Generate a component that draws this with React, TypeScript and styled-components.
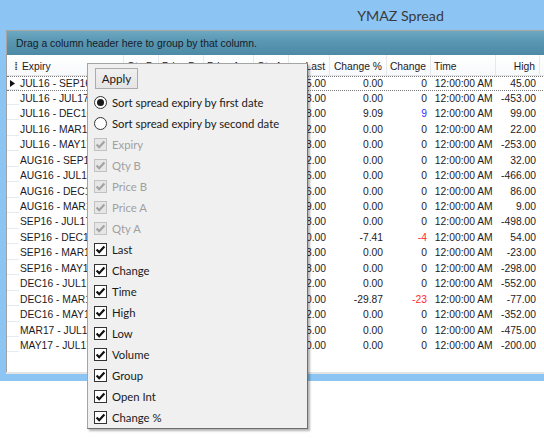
import React from "react";
import styled, { createGlobalStyle } from "styled-components";

const GlobalStyle = createGlobalStyle`
  html, body { margin: 0; padding: 0; background: #ffffff; overflow: hidden; }
  * { box-sizing: border-box; }
`;

const Page = styled.div`
  position: relative;
  width: 544px;
  height: 439px;
  overflow: hidden;
  background: #ffffff;
`;

const Window = styled.div`
  width: 801px;
  height: 381px;
  background: #8cc5f4;
  display: flex;
  flex-direction: column;
`;

const TitleBar = styled.div`
  height: 30px;
  display: flex;
  align-items: center;
  justify-content: center;
  font-family: Lato, "Liberation Sans", sans-serif;
  font-size: 14.2px;
  color: #3a3a3a;
  padding-top: 1px;
`;

const Body = styled.div`
  flex: 1;
  display: flex;
  flex-direction: column;
  padding: 0 0 7px 6px;
`;

const GroupPanel = styled.div`
  height: 25px;
  border-top: 1px solid #a8a69e;
  border-left: 1px solid #a8a69e;
  background: linear-gradient(#6ea8c2 0%, #5896b1 45%, #4c8aa5 100%);
  display: flex;
  align-items: center;
  padding-left: 9px;
  font-family: "Liberation Sans", Arial, sans-serif;
  font-size: 10.4px;
  color: #16202a;
`;

const Grid = styled.div`
  flex: 1;
  background: #ffffff;
  border-left: 1px solid #a0a0a0;
  display: flex;
  flex-direction: column;
  font-family: "Liberation Sans", Arial, sans-serif;
  font-size: 10.3px;
  color: #1e1a24;
`;

const BottomStrip = styled.div`
  height: 2px;
  background: #e4e4e4;
`;

const cols = "12px 105px 35px 45px 50px 35px 41px 57px 44px 65px 44px 44px 1fr";

const HeaderRow = styled.div`
  display: grid;
  grid-template-columns: ${cols};
  height: 21px;
  background: linear-gradient(#ffffff, #f7f9fb);
  border-bottom: 1px solid #e2e4e8;
`;

const HeaderCell = styled.div<{ $right?: boolean }>`
  display: flex;
  align-items: center;
  justify-content: ${(p) => (p.$right ? "flex-end" : "flex-start")};
  padding: 2px ${(p) => (p.$right ? "4px" : "2px")} 0 ${(p) => (p.$right ? "2px" : "3px")};
  border-right: 1px solid #e6e8ec;
  white-space: nowrap;
  overflow: hidden;
`;

const Grip = styled.div`
  display: flex;
  align-items: center;
  justify-content: flex-end;
  padding: 2px 1px 0 0;
  font-size: 11px;
  font-weight: bold;
  color: #444;
`;

const DataRow = styled.div<{ $focus?: boolean }>`
  display: grid;
  grid-template-columns: ${cols};
  height: 15.47px;
  border-top: 1px dotted ${(p) => (p.$focus ? "#7a7a7a" : "transparent")};
  border-bottom: 1px dotted ${(p) => (p.$focus ? "#7a7a7a" : "transparent")};
  margin-bottom: ${(p) => (p.$focus ? "-1px" : "0")};
`;

const Indicator = styled.div`
  border-bottom: 1px solid #e4ecf3;
  display: flex;
  align-items: center;
  padding-left: 3px;
`;

const Cell = styled.div<{ $right?: boolean; $tone?: "pos" | "neg" }>`
  display: flex;
  align-items: center;
  justify-content: ${(p) => (p.$right ? "flex-end" : "flex-start")};
  padding: 0 ${(p) => (p.$right ? "4px" : "1px")} 0 1px;
  white-space: nowrap;
  overflow: hidden;
  color: ${(p) => (p.$tone === "pos" ? "#3030ff" : p.$tone === "neg" ? "#ff2a2a" : "inherit")};
`;

const Popup = styled.div`
  position: absolute;
  left: 87px;
  top: 63px;
  width: 221px;
  height: 366px;
  background: #f0f0f0;
  border: 1px solid #a4a4a4;
  border-right-color: #6e6e6e;
  border-bottom-color: #6e6e6e;
  box-shadow: 2px 2px 2px rgba(0, 0, 0, 0.3);
  padding: 4px 6px 0 6px;
  display: flex;
  flex-direction: column;
  font-family: Lato, "Liberation Sans", sans-serif;
  font-size: 11.3px;
  color: #1a1a1a;
`;

const ApplyButton = styled.button`
  align-self: flex-start;
  margin: 0 0 3px 1px;
  width: 43px;
  height: 21px;
  border: 1px solid #acacac;
  background: linear-gradient(#f0f0f0, #e5e5e5);
  font-family: Lato, "Liberation Sans", sans-serif;
  font-size: 11.6px;
  color: #1a1a1a;
  padding: 0;
`;

const Item = styled.div<{ $disabled?: boolean }>`
  height: 21px;
  display: flex;
  align-items: center;
  gap: 5px;
  color: ${(p) => (p.$disabled ? "#a0a0a0" : "#1a1a1a")};
  white-space: nowrap;
`;

const Radio = styled.div<{ $on?: boolean }>`
  width: 13px;
  height: 13px;
  border-radius: 50%;
  border: 1px solid #333;
  background: #fff;
  display: flex;
  align-items: center;
  justify-content: center;
  flex: none;
  &::after {
    content: "";
    width: 7px;
    height: 7px;
    border-radius: 50%;
    background: ${(p) => (p.$on ? "#1a1a1a" : "transparent")};
  }
`;

const Box = styled.div<{ $disabled?: boolean }>`
  width: 13px;
  height: 13px;
  border: 1px solid ${(p) => (p.$disabled ? "#c2c2c2" : "#333333")};
  background: ${(p) => (p.$disabled ? "#e6e6e6" : "#ffffff")};
  display: flex;
  align-items: center;
  justify-content: center;
  flex: none;
`;

const Check = ({ color }: { color: string }) => (
  <svg width="11" height="11" viewBox="0 0 11 11">
    <polyline points="1.6,5.4 4.2,8.2 9.4,2.4" fill="none" stroke={color} strokeWidth="2.2" />
  </svg>
);

const Triangle = () => (
  <svg width="5" height="7" viewBox="0 0 5 7">
    <polygon points="0,0 5,3.5 0,7" fill="#111" />
  </svg>
);

type Row = [string, string, string, string, string];
const rows: Row[] = [
  ["JUL16 - SEP16", "45.00", "0.00", "0", "45.00"],
  ["JUL16 - JUL17", "-453.00", "0.00", "0", "-453.00"],
  ["JUL16 - DEC16", "108.00", "9.09", "9", "99.00"],
  ["JUL16 - MAR17", "22.00", "0.00", "0", "22.00"],
  ["JUL16 - MAY17", "-253.00", "0.00", "0", "-253.00"],
  ["AUG16 - SEP16", "32.00", "0.00", "0", "32.00"],
  ["AUG16 - JUL17", "-466.00", "0.00", "0", "-466.00"],
  ["AUG16 - DEC16", "86.00", "0.00", "0", "86.00"],
  ["AUG16 - MAR17", "9.00", "0.00", "0", "9.00"],
  ["SEP16 - JUL17", "-498.00", "0.00", "0", "-498.00"],
  ["SEP16 - DEC16", "50.00", "-7.41", "-4", "54.00"],
  ["SEP16 - MAR17", "-23.00", "0.00", "0", "-23.00"],
  ["SEP16 - MAY17", "-298.00", "0.00", "0", "-298.00"],
  ["DEC16 - JUL17", "-552.00", "0.00", "0", "-552.00"],
  ["DEC16 - MAR17", "-100.00", "-29.87", "-23", "-77.00"],
  ["DEC16 - MAY17", "-352.00", "0.00", "0", "-352.00"],
  ["MAR17 - JUL17", "-475.00", "0.00", "0", "-475.00"],
  ["MAY17 - JUL17", "-200.00", "0.00", "0", "-200.00"],
];

const checks: { label: string; disabled?: boolean }[] = [
  { label: "Expiry", disabled: true },
  { label: "Qty B", disabled: true },
  { label: "Price B", disabled: true },
  { label: "Price A", disabled: true },
  { label: "Qty A", disabled: true },
  { label: "Last" },
  { label: "Change" },
  { label: "Time" },
  { label: "High" },
  { label: "Low" },
  { label: "Volume" },
  { label: "Group" },
  { label: "Open Int" },
  { label: "Change %" },
];

const tone = (v: string): "pos" | "neg" | undefined => {
  const n = parseFloat(v);
  if (n > 0) return "pos";
  if (n < 0) return "neg";
  return undefined;
};

export default function App() {
  return (
    <>
      <GlobalStyle />
      <Page>
        <Window>
          <TitleBar>YMAZ Spread</TitleBar>
          <Body>
            <GroupPanel>Drag a column header here to group by that column.</GroupPanel>
            <Grid>
              <HeaderRow>
                <Grip>⁞</Grip>
                <HeaderCell>Expiry</HeaderCell>
                <HeaderCell>Qty B</HeaderCell>
                <HeaderCell>Price B</HeaderCell>
                <HeaderCell>Price A</HeaderCell>
                <HeaderCell>Qty A</HeaderCell>
                <HeaderCell $right>Last</HeaderCell>
                <HeaderCell $right>Change %</HeaderCell>
                <HeaderCell $right>Change</HeaderCell>
                <HeaderCell>Time</HeaderCell>
                <HeaderCell $right>High</HeaderCell>
                <HeaderCell $right />
                <HeaderCell />
              </HeaderRow>
              {rows.map((r, i) => (
                <DataRow key={r[0]} $focus={i === 0}>
                  <Indicator>{i === 0 && <Triangle />}</Indicator>
                  <Cell>{r[0]}</Cell>
                  <Cell $right />
                  <Cell $right />
                  <Cell $right />
                  <Cell $right />
                  <Cell $right>{r[1]}</Cell>
                  <Cell $right>{r[2]}</Cell>
                  <Cell $right $tone={tone(r[3])}>{r[3]}</Cell>
                  <Cell>&nbsp;12:00:00 AM</Cell>
                  <Cell $right>{r[4]}</Cell>
                  <Cell $right />
                  <Cell />
                </DataRow>
              ))}
            </Grid>
            <BottomStrip />
          </Body>
        </Window>
        <Popup>
          <ApplyButton>Apply</ApplyButton>
          <Item>
            <Radio $on />
            Sort spread expiry by first date
          </Item>
          <Item>
            <Radio />
            Sort spread expiry by second date
          </Item>
          {checks.map((c) => (
            <Item key={c.label} $disabled={c.disabled}>
              <Box $disabled={c.disabled}>
                <Check color={c.disabled ? "#a3a3a3" : "#111111"} />
              </Box>
              {c.label}
            </Item>
          ))}
        </Popup>
      </Page>
    </>
  );
}
